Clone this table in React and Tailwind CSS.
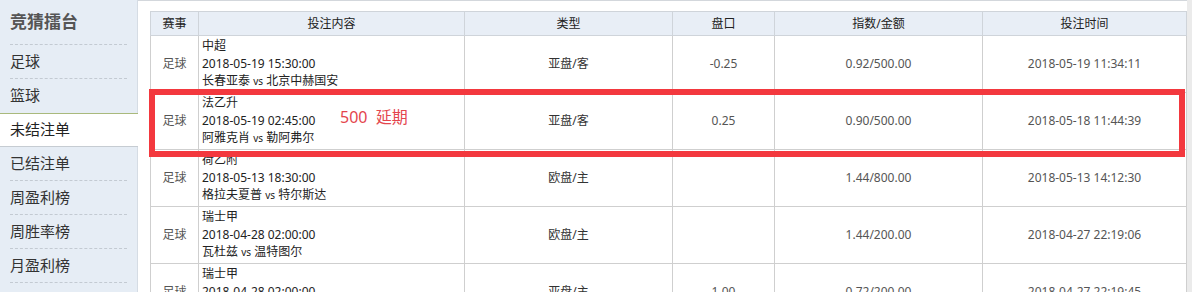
import React from "react";

const menu = [
  { label: "足球" },
  { label: "篮球", last: true },
  { label: "未结注单", active: true },
  { label: "已结注单" },
  { label: "周盈利榜" },
  { label: "周胜率榜" },
  { label: "月盈利榜" },
];

const bets = [
  { sport: "足球", league: "中超", date: "2018-05-19 15:30:00", home: "长春亚泰", away: "北京中赫国安", type: "亚盘/客", line: "-0.25", odds: "0.92/500.00", time: "2018-05-19 11:34:11" },
  { sport: "足球", league: "法乙升", date: "2018-05-19 02:45:00", home: "阿雅克肖", away: "勒阿弗尔", type: "亚盘/客", line: "0.25", odds: "0.90/500.00", time: "2018-05-18 11:44:39" },
  { sport: "足球", league: "荷乙附", date: "2018-05-13 18:30:00", home: "格拉夫夏普", away: "特尔斯达", type: "欧盘/主", line: "", odds: "1.44/800.00", time: "2018-05-13 14:12:30" },
  { sport: "足球", league: "瑞士甲", date: "2018-04-28 02:00:00", home: "瓦杜兹", away: "温特图尔", type: "欧盘/主", line: "", odds: "1.44/200.00", time: "2018-04-27 22:19:06" },
  { sport: "足球", league: "瑞士甲", date: "2018-04-28 02:00:00", home: "瓦杜兹", away: "温特图尔", type: "亚盘/主", line: "1.00", odds: "0.72/200.00", time: "2018-04-27 22:19:45" },
];

const headers = ["赛事", "投注内容", "类型", "盘口", "指数/金额", "投注时间"];

export default function App() {
  return (
    <div
      className="flex h-[292px] w-[1192px] overflow-hidden bg-white text-[12px] leading-[17.5px] text-[#333]"
      style={{ fontFamily: '"Noto Sans", "Noto Sans CJK SC", sans-serif' }}
    >
      {/* Sidebar */}
      <div className="w-[138px] shrink-0 border-r border-[#d5dce4] bg-[#e6edf5]">
        <div className="mx-[10px] flex h-[45px] items-center border-b border-dashed border-[#c3cad2] text-[17px] font-bold text-[#555]">
          竞猜擂台
        </div>
        {menu.map((item) =>
          item.active ? (
            <div
              key={item.label}
              className="relative z-10 -mr-px flex h-[34px] items-center border-t border-b border-t-[#a9b97c] border-b-[#c6ccd2] bg-white pl-[10px] text-[15px] text-[#222]"
            >
              {item.label}
            </div>
          ) : (
            <div
              key={item.label}
              className={`mx-[10px] flex h-[34px] items-center text-[15px] text-[#333] ${item.last ? "" : "border-b border-dashed border-[#c3cad2]"}`}
            >
              {item.label}
            </div>
          )
        )}
      </div>

      {/* Main */}
      <div className="relative flex-1 border-t border-[#d3d7dc] pl-[12px] pt-[10px]">
        <table className="w-[1036px] table-fixed border-collapse">
          <colgroup>
            <col className="w-[48px]" />
            <col className="w-[266px]" />
            <col className="w-[208px]" />
            <col className="w-[102px]" />
            <col className="w-[208px]" />
            <col className="w-[204px]" />
          </colgroup>
          <thead>
            <tr className="h-[24px] bg-[#e8eef6]">
              {headers.map((h) => (
                <th key={h} className="border border-[#cfd4da] text-center font-normal text-[#222]">
                  {h}
                </th>
              ))}
            </tr>
          </thead>
          <tbody>
            {bets.map((b, i) => (
              <tr key={i} className="h-[57px]">
                <td className="border border-[#cfcfcf] text-center text-[#555]">{b.sport}</td>
                <td className="border border-[#cfcfcf] pl-[3px] align-middle text-[#222]">
                  <div>{b.league}</div>
                  <div>{b.date}</div>
                  <div>
                    {b.home} <span className="text-[10px]">vs</span> {b.away}
                  </div>
                </td>
                <td className="border border-[#cfcfcf] text-center text-[#333]">{b.type}</td>
                <td className="border border-[#cfcfcf] text-center text-[#555]">{b.line}</td>
                <td className="border border-[#cfcfcf] text-center text-[#555]">{b.odds}</td>
                <td className="border border-[#cfcfcf] text-center text-[#555]">{b.time}</td>
              </tr>
            ))}
          </tbody>
        </table>

        {/* annotation over the second row */}
        <div className="pointer-events-none absolute left-[11px] top-[88px] h-[68px] w-[1036px] border-[6px] border-[#f3383e]" />
        <div className="absolute left-[202px] top-[108px] text-[16px] text-[#e4454d]">
          500&nbsp;&nbsp;延期
        </div>
      </div>
      <div className="w-[6px] shrink-0 bg-[#ebebeb]" />
    </div>
  );
}
